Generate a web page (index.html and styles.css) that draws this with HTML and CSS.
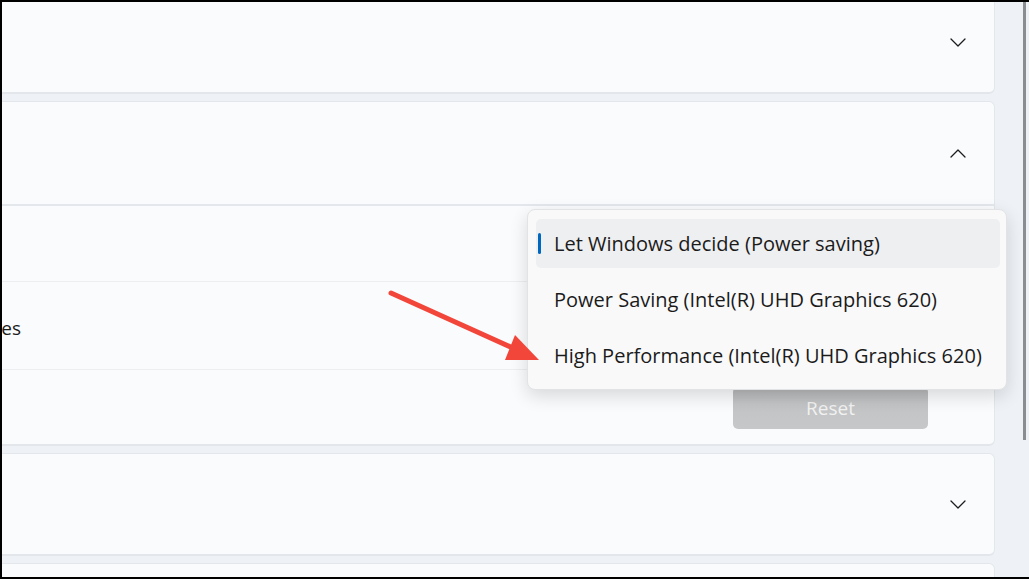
FILE: index.html
```html
<!DOCTYPE html>
<html lang="en">
<head>
<meta charset="utf-8">
<title>Graphics settings</title>
<link rel="stylesheet" href="styles.css">
</head>
<body>
<div class="screen">
  <div class="content">
    <div class="card card-top">
      <div class="card-head">
        <span class="chev"><svg width="16" height="9" viewBox="0 0 16 9"><path d="M1 1 L8 8 L15 1" fill="none" stroke="#1c1c1c" stroke-width="1.3" stroke-linecap="round" stroke-linejoin="round"/></svg></span>
      </div>
    </div>
    <div class="card card-open">
      <div class="card-head">
        <span class="chev"><svg width="16" height="9" viewBox="0 0 16 9"><path d="M1 8 L8 1 L15 8" fill="none" stroke="#1c1c1c" stroke-width="1.3" stroke-linecap="round" stroke-linejoin="round"/></svg></span>
      </div>
      <div class="row row-first"></div>
      <div class="row row-mid">
        <div class="label">Graphics preferences</div>
      </div>
      <div class="row row-last">
        <button class="reset">Reset</button>
      </div>
    </div>
    <div class="card">
      <div class="card-head">
        <span class="chev"><svg width="16" height="9" viewBox="0 0 16 9"><path d="M1 1 L8 8 L15 1" fill="none" stroke="#1c1c1c" stroke-width="1.3" stroke-linecap="round" stroke-linejoin="round"/></svg></span>
      </div>
    </div>
    <div class="card card-bottom"></div>
  </div>
  <div class="scrollbar"><div class="thumb"></div></div>

  <div class="menu">
    <div class="item selected"><span class="marker"></span>Let Windows decide (Power saving)</div>
    <div class="item">Power Saving (Intel(R) UHD Graphics 620)</div>
    <div class="item">High Performance (Intel(R) UHD Graphics 620)</div>
  </div>

  <svg class="arrow" width="1029" height="579" viewBox="0 0 1029 579">
    <line x1="391" y1="293" x2="515" y2="349" stroke="#f2463a" stroke-width="5" stroke-linecap="round"/>
    <polygon points="539,360 505,360 515,335" fill="#f2463a"/>
  </svg>
</div>
</body>
</html>
```
FILE: styles.css
```css
* { box-sizing: border-box; }
html, body { margin: 0; padding: 0; }
body {
  background: #000;
  font-family: "Open Sans", "Noto Sans", sans-serif;
  color: #1b1b1b;
  width: 1029px;
  height: 579px;
  overflow: hidden;
}
.screen {
  position: relative;
  margin: 2px 0 0 2px;
  width: 1027px;
  height: 575px;
  background: #eef2f7;
  overflow: hidden;
  display: flex;
}
.content {
  flex: 1;
  margin-left: -300px;
  margin-top: -10px;
  padding-right: 27px;
  display: flex;
  flex-direction: column;
  gap: 7px;
}
.card {
  background: #fafbfd;
  border: 1px solid #e3e6ea;
  border-bottom-width: 2px;
  border-radius: 6px;
  flex-shrink: 0;
}
.card-head {
  height: 100px;
  display: flex;
  align-items: center;
  justify-content: flex-end;
  padding-right: 28px;
}
.card-top .card-head { height: 99px; }
.card-open .card-head { height: 102px; }
.chev { display: flex; width: 16px; height: 9px; }
.row {
  display: flex;
  align-items: center;
  border-top: 1px solid #eceef2;
}
.row-first { height: 77px; border-top: 2px solid #e4e7eb; }
.row-mid { height: 88px; padding-top: 5px; }
.row-last { height: 75px; justify-content: flex-end; padding-right: 66px; }
.label {
  width: 318px;
  text-align: right;
  white-space: nowrap;
  font-size: 19px;
}
.reset {
  width: 195px;
  height: 42px;
  border: none;
  border-radius: 5px;
  background: linear-gradient(#b4b5b6, #c3c4c5 40%, #c6c7c8);
  color: #f2f2f2;
  font-family: inherit;
  font-size: 19px;
  padding: 0;
  margin-top: 1px;
}
.card-bottom { height: 40px; }
.scrollbar {
  width: 7px;
  flex-shrink: 0;
  background: #eef2f7;
  display: flex;
  justify-content: flex-end;
}
.thumb {
  width: 3px;
  height: 438px;
  background: #8a8d91;
  margin-right: 3px;
}
.menu {
  position: absolute;
  left: 525px;
  top: 207px;
  width: 480px;
  height: 181px;
  background: #f9f9fa;
  border: 1px solid #e2e3e5;
  border-radius: 8px;
  box-shadow: 0 6px 18px rgba(0,0,0,0.14);
  padding: 9px 6px 9px 8px;
  display: flex;
  flex-direction: column;
  gap: 7px;
}
.item {
  position: relative;
  height: 49px;
  display: flex;
  align-items: center;
  padding-left: 18px;
  font-size: 20px;
  border-radius: 5px;
  white-space: nowrap;
}
.item.selected { background: #eeeff1; }
.marker {
  position: absolute;
  left: 2px;
  top: 14px;
  width: 3px;
  height: 21px;
  border-radius: 2px;
  background: #0067c0;
}
.arrow {
  position: absolute;
  left: -2px;
  top: -2px;
  pointer-events: none;
}
```
